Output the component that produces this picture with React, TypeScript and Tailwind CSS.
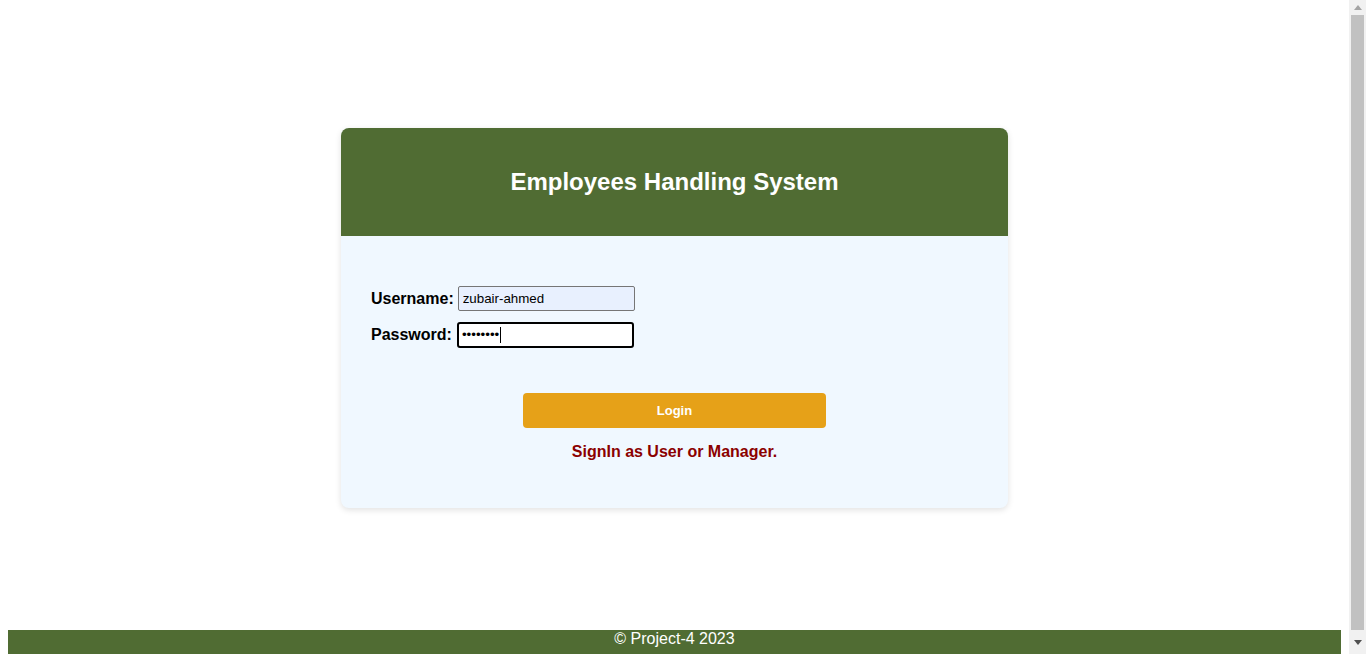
import React from 'react';

const Scrollbar: React.FC = () => (
    <div className="flex h-full w-[17px] shrink-0 flex-col items-center bg-[#f1f1f1]">
        <div className="flex h-[15px] w-full items-center justify-center">
            <svg width="8" height="5" viewBox="0 0 8 5">
                <path d="M0 5 L4 0 L8 5 Z" fill="#a3a3a3" />
            </svg>
        </div>
        <div className="w-[13px] flex-1 bg-[#c1c1c1]" />
        <div className="flex h-[24px] w-full items-center justify-center">
            <svg width="8" height="5" viewBox="0 0 8 5">
                <path d="M0 0 L8 0 L4 5 Z" fill="#505050" />
            </svg>
        </div>
    </div>
);

const App: React.FC = () => {
    return (
        <div className="flex h-[654px] overflow-hidden bg-white font-['Liberation_Sans',Arial,sans-serif] text-black">
            <div className="min-w-0 flex-1 p-2">
                <div className="mx-auto mt-[120px] w-[667px] rounded-lg bg-[#f0f8ff] shadow-[0_2px_6px_rgba(0,0,0,0.12)]">
                    <div className="flex h-[108px] items-center justify-center rounded-t-lg bg-[#506c33]">
                        <h1 className="text-[24px] font-bold text-white">Employees Handling System</h1>
                    </div>
                    <div className="px-[30px] pt-[50px] pb-[47px]">
                        <div className="flex flex-col gap-[11px]">
                            <div className="flex items-center">
                                <label className="text-[16px] font-bold">Username:</label>
                                <input
                                    type="text"
                                    defaultValue="zubair-ahmed"
                                    className="ml-1 h-[25px] w-[177px] rounded-[2px] border border-[#767676] bg-[#e8f0fe] px-1 text-[13.33px] outline-none"
                                />
                            </div>
                            <div className="flex items-center">
                                <label className="text-[16px] font-bold">Password:</label>
                                <div className="ml-[5px] flex h-[26px] w-[177px] items-center rounded-[3px] border-2 border-black bg-white px-[3px] text-[13.33px]">
                                    <span>••••••••</span>
                                    <span className="ml-px h-[16px] w-px bg-black" />
                                </div>
                            </div>
                        </div>
                        <div className="mt-[45px] flex flex-col items-center">
                            <button className="h-[35px] w-[303px] rounded bg-[#e6a118] text-[13px] font-bold text-white">
                                Login
                            </button>
                            <p className="mt-[15px] text-[16px] leading-[18px] font-bold text-[#8b0000]">
                                SignIn as User or Manager.
                            </p>
                        </div>
                    </div>
                </div>
                <footer className="mt-[122px] h-[30px] bg-[#506c33] text-center text-[16px] leading-[18px] text-white">
                    © Project-4 2023
                </footer>
            </div>
            <Scrollbar />
        </div>
    );
};

export default App;
